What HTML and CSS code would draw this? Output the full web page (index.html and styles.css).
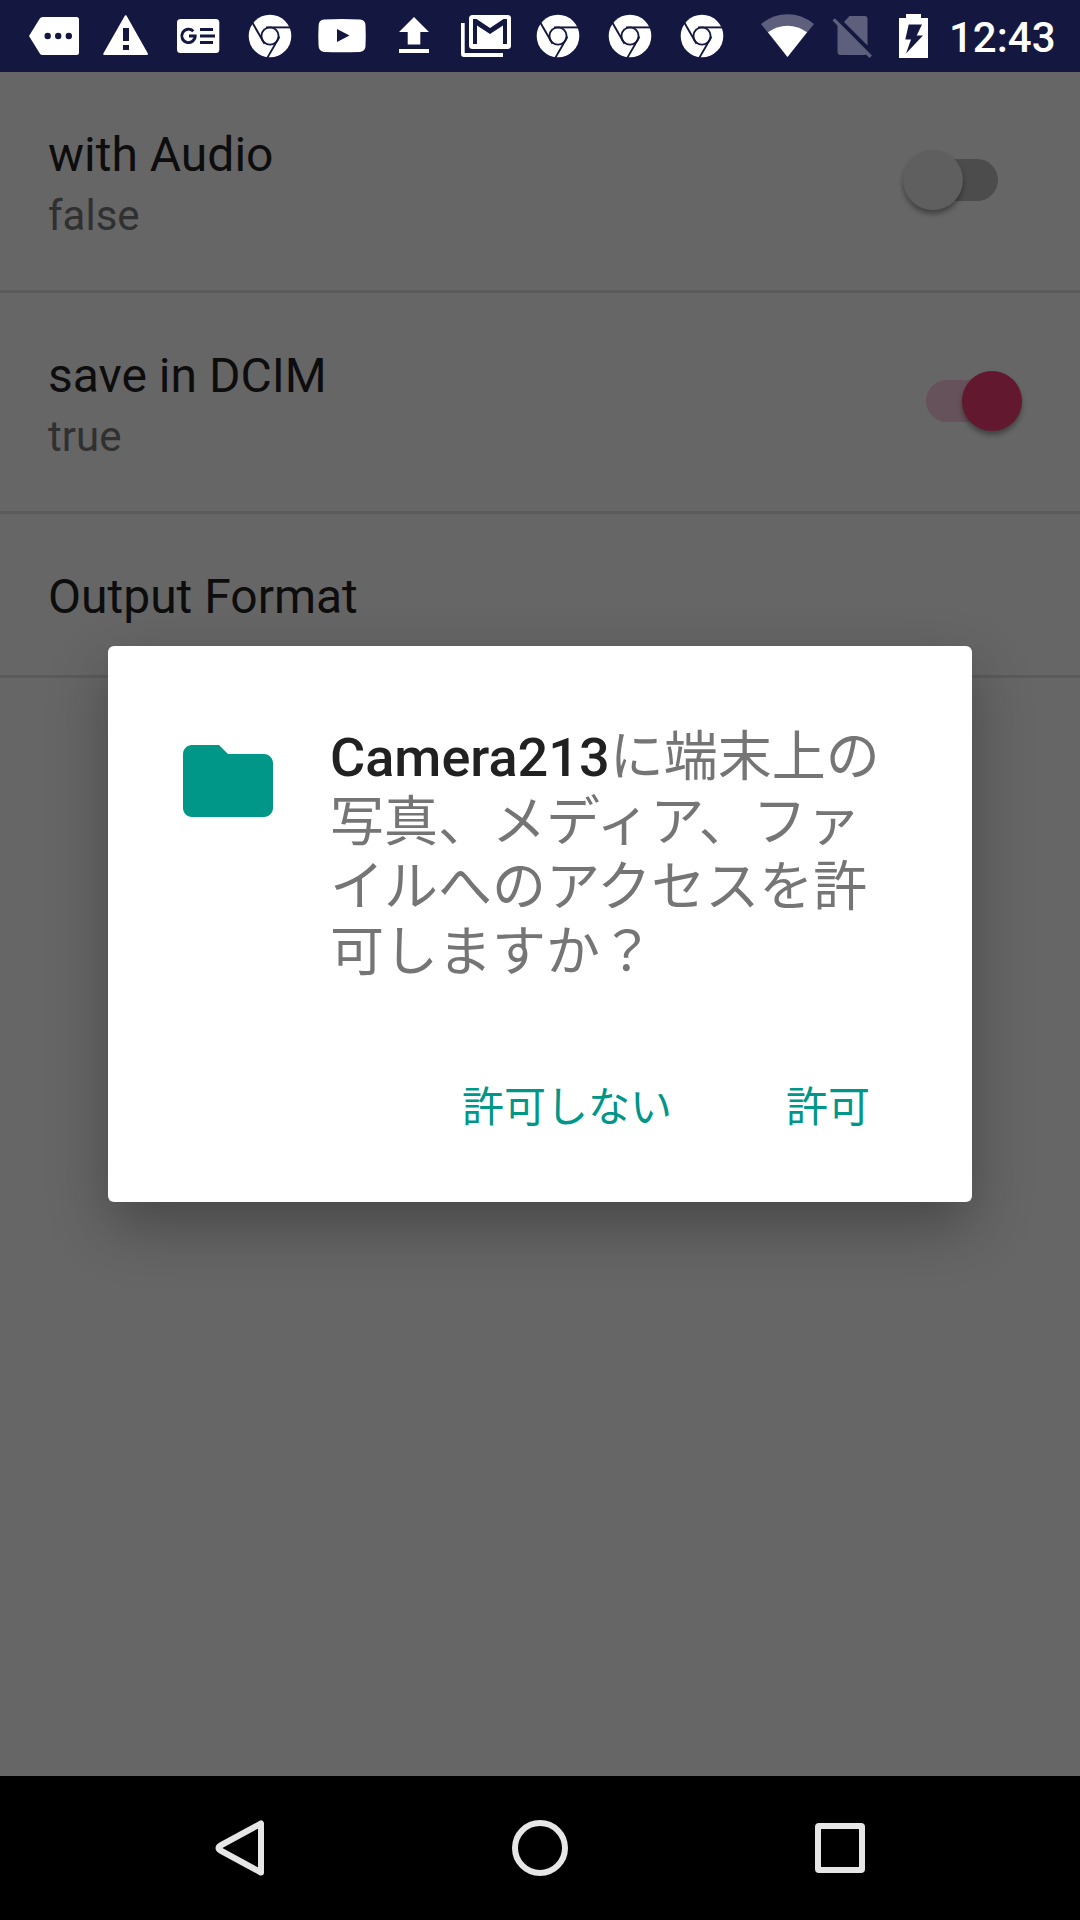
FILE: index.html
```html
<!DOCTYPE html>
<html lang="ja">
<head>
<meta charset="utf-8">
<title>Settings</title>
<link rel="stylesheet" href="styles.css">
</head>
<body>
<svg class="defs" aria-hidden="true">
  <symbol id="chrome" viewBox="0 0 72 72">
    <circle cx="36" cy="36" r="21.3" fill="#fff"/>
    <g fill="none" stroke="#141840" stroke-width="1.9">
      <circle cx="36" cy="36" r="8.6"/>
      <path d="M32 27.400H58"/>
      <path d="M32 27.400H58" transform="rotate(120 36 36)"/>
      <path d="M32 27.400H58" transform="rotate(240 36 36)"/>
    </g>
  </symbol>
</svg>

<header class="status">
  <svg class="slot" viewBox="0 0 72 72"><path fill="#fff" d="M24.5 17H58.5Q61 17 61 19.500V52.500Q61 55 58.500 55H24.500Q22.800 55 21.800 53.500L11 36L21.800 18.500Q22.800 17 24.500 17Z"/><g fill="#141840"><circle cx="29.700" cy="36" r="3.200"/><circle cx="40.200" cy="36" r="3.200"/><circle cx="50.800" cy="36" r="3.200"/></g></svg>
  <svg class="slot" viewBox="0 0 72 72"><path fill="#fff" stroke="#fff" stroke-width="2" stroke-linejoin="round" d="M35.700 16.200L57 54H14.200Z"/><path fill="#141840" d="M33 28h6v13h-6zM33 45h6v5h-6z"/></svg>
  <svg class="slot" viewBox="0 0 72 72"><rect x="15" y="19" width="42.300" height="34" rx="3.500" fill="#fff"/><path fill="none" stroke="#141840" stroke-width="2.900" d="M31.300 31.200A6.700 6.700 0 1 0 33.200 36H27"/><path fill="#141840" d="M38 28h13v3H38zM38 34.500h15v3H38zM38 41h13v3H38z"/></svg>
  <svg class="slot"><use href="#chrome"/></svg>
  <svg class="slot" viewBox="0 0 72 72"><path fill="#fff" d="M18 19.500Q36 18.700 54 19.500Q59.500 20 59.500 25.500Q60 35.700 59.500 46Q59.500 51.300 54 51.900Q36 52.700 18 51.900Q12.800 51.300 12.600 46Q12 35.700 12.600 25.500Q12.800 20 18 19.500Z"/><path fill="#141840" d="M31 29L43.500 35.500L31 42Z"/></svg>
  <svg class="slot" viewBox="0 0 72 72"><path fill="#fff" d="M36 17L51 32H42.300V44.500H29.700V32H21ZM21 49H51V53H21Z"/></svg>
  <svg class="slot" viewBox="0 0 72 72"><path fill="#fff" d="M11 23H14.700V53H53V57H14Q11 57 11 54Z"/><rect x="19" y="15" width="42" height="34" rx="3.500" fill="#fff"/><path fill="#141840" d="M23 44V19H26.500L40 28L53.500 19H57V44H53V25.500L40 34L27 25.500V44Z"/></svg>
  <svg class="slot"><use href="#chrome"/></svg>
  <svg class="slot"><use href="#chrome"/></svg>
  <svg class="slot"><use href="#chrome"/></svg>
  <svg class="wifi" viewBox="0 0 72 72"><path fill="#5d5f7c" d="M9 24Q20.500 14.200 35.500 14.200T62 24L35.500 57Z"/><path fill="#fff" d="M16 32.300Q24.500 25.700 35.500 25.700T55 32.300L35.500 57Z"/></svg>
  <svg class="sim" viewBox="0 0 56 72"><path fill="#5d5f7c" d="M20 22L25.500 16H40.500Q43.500 16 43.500 19V45.500ZM13.500 24L43 53.500Q42 55 40 55H17Q13.500 55 13.500 51.500Z"/><path stroke="#5d5f7c" stroke-width="3.400" d="M9.700 19.400L46.700 56.700"/></svg>
  <svg class="battery" viewBox="0 0 68 72"><path fill="#fff" d="M22 14H37V18H44V58H15V18H22Z"/><path fill="#141840" d="M24.700 24.500H38L32.700 35.500H39L22 53.500L27 39.500H21.300Z"/></svg>
  <time class="clock">12:43</time>
</header>

<main class="settings">
  <section class="row">
    <div><div class="title">with Audio</div><div class="value">false</div></div>
    <div class="switch off"><i class="thumb"></i></div>
  </section>
  <section class="row">
    <div><div class="title">save in DCIM</div><div class="value">true</div></div>
    <div class="switch on"><i class="thumb"></i></div>
  </section>
  <section class="row short">
    <div class="title">Output Format</div>
  </section>
</main>

<div class="dialog" role="dialog">
  <div class="message">
    <svg class="folder" viewBox="0 0 24 24"><path fill="#009688" d="M10 4H4C2.900 4 2 4.900 2 6V18C2 19.100 2.900 20 4 20H20C21.100 20 22 19.100 22 18V8C22 6.900 21.100 6 20 6H12Z"/></svg>
    <p class="question"><b>Camera213</b>に端末上の写真、メディア、ファイルへのアクセスを許可しますか？</p>
  </div>
  <div class="actions"><span>許可しない</span><span>許可</span></div>
</div>

<nav class="navbar">
  <svg viewBox="0 0 72 72"><path d="M57 11.500V60.500L16.500 38.500Q12.500 36 16.500 33.500Z"/></svg>
  <svg viewBox="0 0 72 72"><circle cx="36" cy="36" r="25"/></svg>
  <svg viewBox="0 0 72 72"><rect x="14" y="14" width="44" height="44" rx="1"/></svg>
</nav>
</body>
</html>
```
FILE: styles.css
```css
* { box-sizing: border-box; }

body {
  margin: 0;
  width: 1080px;
  height: 1920px;
  display: flex;
  flex-direction: column;
  position: relative;
  overflow: hidden;
  background: #666;
  font-family: Roboto, "Noto Sans CJK JP", sans-serif;
}

.defs { position: absolute; width: 0; height: 0; }

.status {
  display: flex;
  height: 72px;
  padding-left: 18px;
  background: #141840;
}
.status svg { flex: none; height: 72px; }
.slot { width: 72px; }
.wifi { width: 72px; margin-left: 14px; }
.sim { width: 56px; }
.battery { width: 68px; margin: 0 -3px 0 4px; }
.clock {
  color: #fff;
  font-size: 42px;
  font-weight: 500;
  line-height: 76px;
}

.settings { flex: 1; }
.row {
  display: flex;
  justify-content: space-between;
  height: 221px;
  padding: 51px 58px 0 48px;
  border-bottom: 3px solid #5b5b5b;
}
.short { height: 164px; }
.title { font-size: 48px; line-height: 64px; color: #0d0d0d; }
.value { font-size: 42px; line-height: 58px; color: #303030; }

.switch {
  position: relative;
  width: 72px;
  height: 42px;
  margin: 36px 24px 0 0;
  border-radius: 21px;
}
.thumb {
  position: absolute;
  top: -9px;
  width: 60px;
  height: 60px;
  border-radius: 50%;
  box-shadow: 0 4px 5px rgba(0, 0, 0, .35);
}
.off { background: #4c4c4c; }
.off .thumb { left: -23.5px; background: #5f5f5f; }
.on { background: #66525a; }
.on .thumb { left: 35.500px; background: #621930; }

.dialog {
  position: absolute;
  left: 108px;
  top: 646px;
  width: 864px;
  height: 556px;
  display: flex;
  flex-direction: column;
  justify-content: space-between;
  padding: 79px 66px 64px;
  border-radius: 6px;
  background: #fff;
  box-shadow: 0 24px 60px rgba(0, 0, 0, .3);
}
.message { display: flex; gap: 48px; }
.folder { flex: none; width: 108px; height: 108px; margin-top: 2px; }
.question {
  margin: 0;
  width: 576px;
  font-size: 54px;
  line-height: 65px;
  color: #757575;
}
.question b { font-weight: 500; color: #212121; }
.actions {
  display: flex;
  justify-content: flex-end;
  gap: 114px;
  padding-right: 36px;
  font-size: 42px;
  line-height: 60px;
  color: #009688;
}

.navbar {
  display: flex;
  justify-content: center;
  align-items: center;
  gap: 228px;
  height: 144px;
  background: #000;
}
.navbar svg {
  width: 72px;
  height: 72px;
  fill: none;
  stroke: #e6e6e6;
  stroke-width: 6;
  stroke-linejoin: round;
}
```
